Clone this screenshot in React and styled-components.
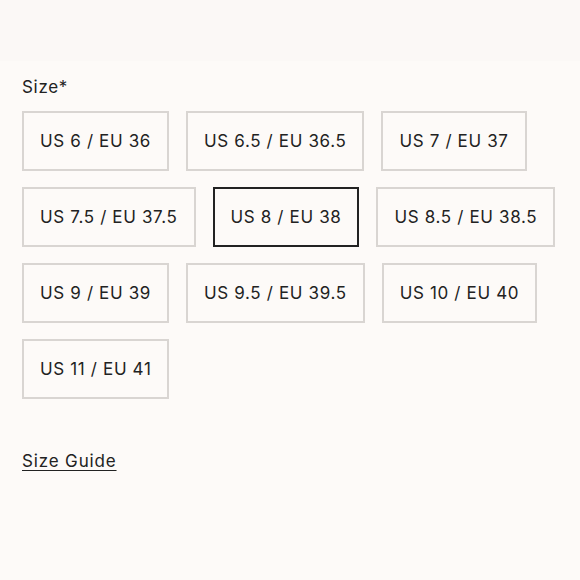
import React from 'react';
import styled, { createGlobalStyle } from 'styled-components';

const GlobalStyle = createGlobalStyle`
  body {
    margin: 0;
    background: #fdfaf8;
    font-family: Inter, "Noto Sans", sans-serif;
    color: #222;
  }
`;

const TopBand = styled.div`
  height: 61px;
  background: #fbf8f6;
`;

const Section = styled.section`
  padding: 14px 22px 0;
`;

const Label = styled.div`
  font-size: 17px;
  letter-spacing: 0.04em;
  line-height: 24px;
  margin-bottom: 12px;
`;

const Options = styled.div`
  display: flex;
  flex-wrap: wrap;
  gap: 16px 17px;
  width: 540px;
`;

const SizeButton = styled.button`
  height: 60px;
  padding: 0 16px;
  background: transparent;
  border: 2px solid ${p => (p.$selected ? '#222' : '#d9d5d2')};
  font-family: inherit;
  font-size: 17px;
  letter-spacing: 0.038em;
  color: #222;
  cursor: pointer;
`;

const GuideLink = styled.a`
  display: inline-block;
  margin-top: 52px;
  font-size: 17px;
  letter-spacing: 0.05em;
  color: #222;
  text-decoration: underline;
  text-underline-offset: 3px;
`;

const sizes = [
  'US 6 / EU 36',
  'US 6.5 / EU 36.5',
  'US 7 / EU 37',
  'US 7.5 / EU 37.5',
  'US 8 / EU 38',
  'US 8.5 / EU 38.5',
  'US 9 / EU 39',
  'US 9.5 / EU 39.5',
  'US 10 / EU 40',
  'US 11 / EU 41',
];

export default function App() {
  return (
    <>
      <GlobalStyle />
      <TopBand />
      <Section>
        <Label>Size*</Label>
        <Options>
          {sizes.map(s => (
            <SizeButton key={s} $selected={s === 'US 8 / EU 38'}>
              {s}
            </SizeButton>
          ))}
        </Options>
        <GuideLink href="#">Size Guide</GuideLink>
      </Section>
    </>
  );
}
